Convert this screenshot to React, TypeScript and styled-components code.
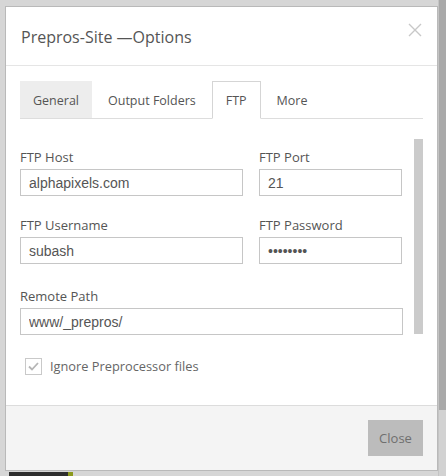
import React from "react";
import styled, { createGlobalStyle } from "styled-components";

const GlobalStyle = createGlobalStyle`
  html, body {
    margin: 0;
    padding: 0;
    background: #d6d6d6;
    font-family: "Open Sans", "Noto Sans", sans-serif;
  }
  * {
    box-sizing: border-box;
  }
`;

const Page = styled.div`
  display: flex;
  width: 446px;
  height: 476px;
  overflow: hidden;
  background: #d6d6d6;
`;

const Main = styled.div`
  flex: 1;
  padding: 6px 0 0 5px;
`;

const PageScroll = styled.div`
  width: 9px;
  display: flex;
  flex-direction: column;
  border-left: 1px solid #c4c4c4;

  .thumb {
    height: 410px;
    background: #a9a9a9;
  }
  .track {
    flex: 1;
    background: #d2d2d2;
  }
`;

const Modal = styled.div`
  width: 433px;
  background: #fff;
  border: 1px solid #b9b9b9;
  display: flex;
  flex-direction: column;
`;

const Header = styled.div`
  height: 59px;
  display: flex;
  align-items: center;
  justify-content: space-between;
  padding: 0 15px 0 15px;
  border-bottom: 1px solid #e5e5e5;
`;

const Title = styled.div`
  font-size: 16px;
  color: #555;
  padding-top: 2px;
`;

const CloseX = styled.button`
  border: none;
  background: none;
  padding: 0;
  margin: -12px 0 0 0;
  width: 14px;
  height: 14px;
  cursor: pointer;
  display: flex;
`;

const Body = styled.div`
  padding: 15px 14px 0 14px;
  height: 339px;
`;

const TabBar = styled.div`
  display: flex;
  align-items: flex-start;
  border-bottom: 1px solid #ddd;
  height: 38px;
`;

const Tab = styled.div<{ $active?: boolean; $shaded?: boolean }>`
  height: ${(p) => (p.$active ? "38px" : "37px")};
  padding: 0 ${(p) => (p.$shaded ? 12 : 13)}px;
  margin-right: 2px;
  display: flex;
  align-items: center;
  font-size: 12.5px;
  color: #555;
  border: 1px solid ${(p) => (p.$active ? "#d5d5d5" : "transparent")};
  border-bottom: ${(p) => (p.$active ? "1px solid #fff" : "none")};
  background: ${(p) => (p.$shaded ? "#ededed" : "#fff")};
  position: relative;
  z-index: ${(p) => (p.$active ? 1 : 0)};
`;

const Pane = styled.div`
  display: flex;
  gap: 11px;
  padding-top: 20px;
`;

const Fields = styled.div`
  flex: 1;
  padding-top: 9px;
`;

const InnerScroll = styled.div`
  width: 9px;
  height: 195px;
  background: #cbcbcb;
`;

const Row = styled.div<{ $gap?: number }>`
  display: grid;
  grid-template-columns: 223px 143px;
  column-gap: 16px;
  margin-bottom: ${(p) => p.$gap ?? 20}px;
`;

const WideRow = styled.div`
  display: grid;
  grid-template-columns: 383px;
  margin-bottom: 22px;
`;

const Field = styled.div`
  display: flex;
  flex-direction: column;
`;

const Label = styled.label`
  font-size: 13px;
  line-height: 18px;
  color: #555;
  margin-bottom: 3px;
`;

const Input = styled.input`
  height: 27px;
  border: 1px solid #c6c6c6;
  padding: 0 8px;
  font-family: "Liberation Sans", Arial, sans-serif;
  font-size: 14px;
  color: #555;
  background: #fff;
  outline: none;
  width: 100%;
`;

const CheckRow = styled.label`
  display: flex;
  align-items: center;
  gap: 8px;
  margin: 0 0 0 5px;
  font-size: 12.8px;
  color: #666;
`;

const CheckBox = styled.span`
  width: 17px;
  height: 17px;
  border: 1px solid #c9c9c9;
  display: flex;
  align-items: center;
  justify-content: center;
  background: #fff;
`;

const Footer = styled.div`
  height: 65px;
  border-top: 1px solid #dcdcdc;
  background: #f4f4f4;
  display: flex;
  justify-content: flex-end;
  align-items: flex-start;
  padding: 14px 14px 0 0;
`;

const Button = styled.button`
  width: 55px;
  height: 36px;
  border: none;
  background: #bcbcbc;
  color: #6f6f6f;
  font-family: "Open Sans", "Noto Sans", sans-serif;
  font-size: 13px;
  padding: 0;
`;

const Taskbar = styled.div`
  display: flex;
  margin: 1px 0 0 4px;
  height: 8px;

  .dark {
    width: 59px;
    background: #2e2e2e;
  }
  .accent {
    width: 5px;
    background: #8c9a1e;
  }
`;

const App: React.FC = () => {
  return (
    <Page>
      <GlobalStyle />
      <Main>
        <Modal>
          <Header>
            <Title>Prepros-Site —Options</Title>
            <CloseX aria-label="close">
              <svg width="14" height="14" viewBox="0 0 14 14">
                <path d="M1 1L13 13M13 1L1 13" stroke="#c8c8c8" strokeWidth="1.4" />
              </svg>
            </CloseX>
          </Header>
          <Body>
            <TabBar>
              <Tab $shaded>General</Tab>
              <Tab>Output Folders</Tab>
              <Tab $active>FTP</Tab>
              <Tab>More</Tab>
            </TabBar>
            <Pane>
              <Fields>
                <Row>
                  <Field>
                    <Label>FTP Host</Label>
                    <Input defaultValue="alphapixels.com" />
                  </Field>
                  <Field>
                    <Label>FTP Port</Label>
                    <Input defaultValue="21" />
                  </Field>
                </Row>
                <Row $gap={23}>
                  <Field>
                    <Label>FTP Username</Label>
                    <Input defaultValue="subash" />
                  </Field>
                  <Field>
                    <Label>FTP Password</Label>
                    <Input type="password" defaultValue="password" />
                  </Field>
                </Row>
                <WideRow>
                  <Field>
                    <Label>Remote Path</Label>
                    <Input defaultValue="www/_prepros/" />
                  </Field>
                </WideRow>
                <CheckRow>
                  <CheckBox>
                    <svg width="11" height="9" viewBox="0 0 11 9">
                      <path d="M1 4.5L4 7.5L10 1" stroke="#b5b5b5" strokeWidth="1.8" fill="none" />
                    </svg>
                  </CheckBox>
                  Ignore Preprocessor files
                </CheckRow>
              </Fields>
              <InnerScroll />
            </Pane>
          </Body>
          <Footer>
            <Button>Close</Button>
          </Footer>
        </Modal>
        <Taskbar>
          <div className="dark" />
          <div className="accent" />
        </Taskbar>
      </Main>
      <PageScroll>
        <div className="thumb" />
        <div className="track" />
      </PageScroll>
    </Page>
  );
};

export default App;
